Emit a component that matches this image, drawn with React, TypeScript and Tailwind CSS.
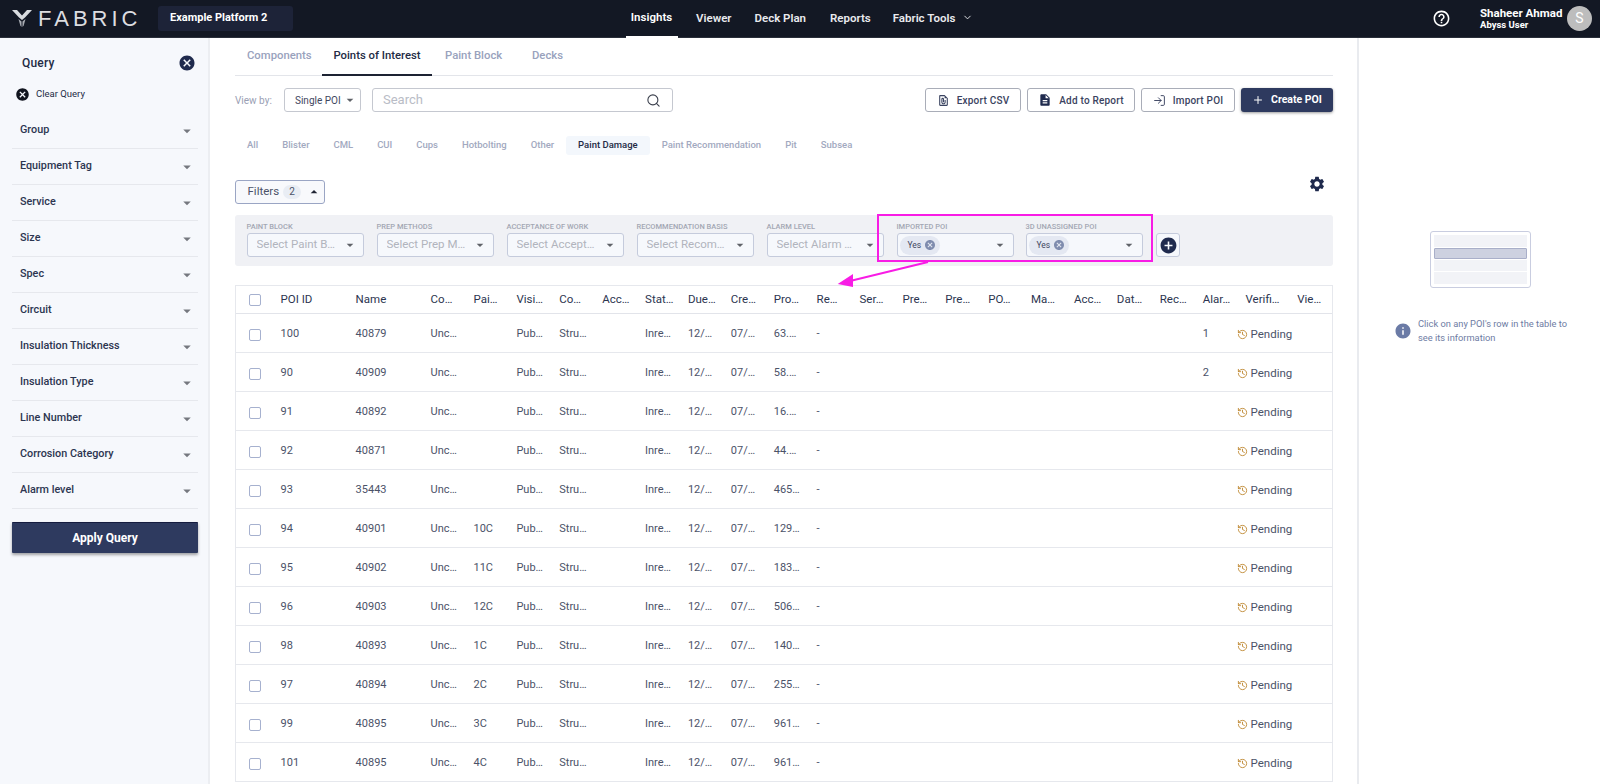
import React from 'react';
import { History, LogIn, Plus, Search, ChevronDown } from 'lucide-react';
import {
  MdAddCircle,
  MdArrowDropDown,
  MdArrowDropUp,
  MdCancel,
  MdDescription,
  MdHelpOutline,
  MdInfo,
  MdOutlineFilePresent,
  MdSettings,
} from 'react-icons/md';

const queryItems = [
  'Group',
  'Equipment Tag',
  'Service',
  'Size',
  'Spec',
  'Circuit',
  'Insulation Thickness',
  'Insulation Type',
  'Line Number',
  'Corrosion Category',
  'Alarm level',
];

const poiTypes = ['All', 'Blister', 'CML', 'CUI', 'Cups', 'Hotbolting', 'Other', 'Paint Damage', 'Paint Recommendation', 'Pit', 'Subsea'];

const filterSelects = [
  ['PAINT BLOCK', 'Select Paint B…'],
  ['PREP METHODS', 'Select Prep M…'],
  ['ACCEPTANCE OF WORK', 'Select Accept…'],
  ['RECOMMENDATION BASIS', 'Select Recom…'],
  ['ALARM LEVEL', 'Select Alarm …'],
];

const headers = ['POI ID', 'Name', 'Co…', 'Pai…', 'Visi…', 'Co…', 'Acc…', 'Stat…', 'Due…', 'Cre…', 'Pro…', 'Re…', 'Ser…', 'Pre…', 'Pre…', 'PO…', 'Ma…', 'Acc…', 'Dat…', 'Rec…', 'Alar…', 'Verifi…', 'Vie…'];

const rows = [
  { id: '100', name: '40879', block: '', pro: '63.…', alarm: '1' },
  { id: '90', name: '40909', block: '', pro: '58.…', alarm: '2' },
  { id: '91', name: '40892', block: '', pro: '16.…', alarm: '' },
  { id: '92', name: '40871', block: '', pro: '44.…', alarm: '' },
  { id: '93', name: '35443', block: '', pro: '465…', alarm: '' },
  { id: '94', name: '40901', block: '10C', pro: '129…', alarm: '' },
  { id: '95', name: '40902', block: '11C', pro: '183…', alarm: '' },
  { id: '96', name: '40903', block: '12C', pro: '506…', alarm: '' },
  { id: '98', name: '40893', block: '1C', pro: '140…', alarm: '' },
  { id: '97', name: '40894', block: '2C', pro: '255…', alarm: '' },
  { id: '99', name: '40895', block: '3C', pro: '961…', alarm: '' },
  { id: '101', name: '40895', block: '4C', pro: '961…', alarm: '' },
];

const gridCols = 'grid grid-cols-[44.6px_75px_75px_repeat(19,42.9px)_51.7px_1fr] items-center';

function Checkbox() {
  return <span className="block w-[12px] h-[12px] rounded-[2px] border-[1.5px] border-[#a6b1cf] bg-white" />;
}

function TopBar() {
  return (
    <header className="h-[38px] bg-[#131824] flex items-center border-b border-[#2a2f3a] shrink-0 relative">
      <div className="flex items-center pl-[12px] w-[158px]">
        <svg width="20" height="17" viewBox="0 0 20 17" className="shrink-0">
          <polygon points="0,0 5,0 10,5.5 15,0 20,0 13,7.5 10,10 7,7.5" fill="#d9dbdf" />
          <polygon points="6.5,9 9.5,11.5 9.5,17 8.3,15.5" fill="#a9acb3" />
          <polygon points="13.5,9 10.5,11.5 10.5,17 11.7,15.5" fill="#a9acb3" />
        </svg>
        <span className="ml-[6px] text-[22px] leading-none tracking-[4px] text-[#dcdde0] font-['Liberation_Sans',sans-serif]">FABRIC</span>
      </div>
      <div className="w-[135px] h-[25px] rounded-[3px] bg-[#1d2338] flex items-center pl-[12px] text-[11px] font-bold text-white">Example Platform 2</div>
      <nav className="flex items-center h-full text-[11.5px] font-semibold text-[#e9eaee]">
        <div className="ml-[332.5px] w-[52px] h-[38px] flex items-center justify-center border-b-2 border-white text-white">Insights</div>
        <div className="ml-[18.5px]">Viewer</div>
        <div className="ml-[23px]">Deck Plan</div>
        <div className="ml-[24px]">Reports</div>
        <div className="ml-[22px]">Fabric Tools</div>
        <ChevronDown className="ml-[7px] w-[11px] h-[11px] -mt-[3px]" strokeWidth={2} />
      </nav>
      <div className="ml-auto flex items-center pr-[8px] text-white">
        <MdHelpOutline className="w-[19px] h-[19px] mr-[29px]" />
        <div className="w-[87px] font-bold leading-[12px]">
          <div className="text-[11.5px]">Shaheer Ahmad</div>
          <div className="text-[9.5px]">Abyss User</div>
        </div>
        <div className="w-[25px] h-[25px] rounded-full bg-[#bdbdbd] flex items-center justify-center text-[14px] text-white">S</div>
      </div>
    </header>
  );
}

function QuerySidebar() {
  return (
    <aside className="w-[210px] shrink-0 bg-[#f6f8fc] border-r-2 border-[#eceef2] pl-[12px] pr-[10px]">
      <div className="flex items-center justify-between h-[50px] pl-[10px] pr-[2px]">
        <span className="text-[12px] font-medium text-[#232b45] tracking-[0.2px]">Query</span>
        <MdCancel className="w-[18px] h-[18px] text-[#1f2a4d]" />
      </div>
      <div className="flex items-center h-[12px] ml-[3px] mb-[13px]">
        <MdCancel className="w-[15px] h-[15px] text-[#11151f]" />
        <span className="ml-[6px] text-[9.5px] text-[#232b45]">Clear Query</span>
      </div>
      {queryItems.map((item) => (
        <div key={item} className="h-[36px] flex items-center justify-between border-b-[1.5px] border-[#e6e8ed] pl-[8px] pr-[2px] text-[10.8px] font-medium text-[#2c3550]">
          <span>{item}</span>
          <MdArrowDropDown className="w-[18px] h-[18px] text-[#75787f]" />
        </div>
      ))}
      <button className="mt-[13px] w-full h-[31px] rounded-[1px] bg-[#2e3a5f] border-t border-[#151c3f] shadow-[0_2px_3px_rgba(0,0,0,0.35)] text-[12px] font-bold text-white">Apply Query</button>
    </aside>
  );
}

function ActionButton({ icon, label, width }: { icon: React.ReactNode; label: string; width: string }) {
  return (
    <button className={`${width} h-[24px] flex items-center justify-center gap-[7px] rounded-[3px] border border-[#a9adb8] bg-white text-[10px] font-medium tracking-[0.2px] text-[#3a4360]`}>
      {icon}
      {label}
    </button>
  );
}

function FilterSelect({ label, placeholder }: { label: string; placeholder: string }) {
  return (
    <div className="w-[117px] shrink-0">
      <div className="h-[12px] text-[7.5px] font-medium leading-[12px] text-[#a3a7b3] whitespace-nowrap">{label}</div>
      <div className="h-[24px] rounded-[3px] border border-[#c5cbdc] bg-[#f6f8fc] flex items-center justify-between pl-[9px] pr-[5px] text-[11.5px] text-[#b1b4bd]">
        <span className="whitespace-nowrap overflow-hidden">{placeholder}</span>
        <MdArrowDropDown className="w-[16px] h-[16px] text-[#5f6268] shrink-0" />
      </div>
    </div>
  );
}

function YesSelect({ label }: { label: string }) {
  return (
    <div className="w-[117.5px] shrink-0">
      <div className="h-[12px] text-[7.5px] font-medium leading-[12px] text-[#a3a7b3] whitespace-nowrap">{label}</div>
      <div className="h-[24px] rounded-[3px] border border-[#c5cbdc] bg-[#f6f8fc] flex items-center justify-between pl-[2px] pr-[5px]">
        <span className="h-[19px] w-[40px] rounded-full bg-[#e4e8f2] flex items-center pl-[8px] text-[8.5px] text-[#3f4760]">
          Yes
          <MdCancel className="ml-[3px] w-[12px] h-[12px] text-[#7f8cae]" />
        </span>
        <MdArrowDropDown className="w-[16px] h-[16px] text-[#5f6268]" />
      </div>
    </div>
  );
}

function PoiRows() {
  return (
    <>
      {rows.map((r) => (
        <div key={r.id} className={`${gridCols} h-[39px] pt-[3px] border-b-[1.5px] border-[#e6e8ed]`}>
          <div className="pl-[12.5px]"><Checkbox /></div>
          <div>{r.id}</div>
          <div>{r.name}</div>
          <div>Unc…</div>
          <div>{r.block}</div>
          <div>Pub…</div>
          <div>Stru…</div>
          <div />
          <div>Inre…</div>
          <div>12/…</div>
          <div>07/…</div>
          <div>{r.pro}</div>
          <div>-</div>
          <div /><div /><div /><div /><div /><div /><div /><div />
          <div>{r.alarm}</div>
          <div className="col-span-2 flex items-center -ml-[9px] gap-[3px] text-[11.5px]">
            <History className="w-[11px] h-[11px] text-[#c08a35]" strokeWidth={2} />
            Pending
          </div>
        </div>
      ))}
    </>
  );
}

function Annotation() {
  return (
    <>
      <div className="absolute left-[876.5px] top-[214px] w-[276.5px] h-[48px] border-2 border-[#f81ce5]" />
      <svg className="absolute left-[830px] top-[258px]" width="105" height="32" viewBox="0 0 105 32">
        <line x1="98" y1="4" x2="20" y2="23" stroke="#f81ce5" strokeWidth="2" />
        <polygon points="7.7,26 23,16 23,29" fill="#f81ce5" />
      </svg>
    </>
  );
}

function DetailsPanel() {
  return (
    <aside className="flex-1 border-l-2 border-[#e9ebef] bg-white pt-[193px]">
      <div className="ml-[71px] w-[101px] h-[57px] rounded-[3px] border border-[#c9cde0] bg-white p-[3px] flex flex-col gap-[1px]">
        <div className="h-[13px] bg-[#f2f3f7]" />
        <div className="h-[11px] bg-[#cdd1e0] border border-[#a9afc9] rounded-[1px]" />
        <div className="h-[11px] bg-[#f2f3f7]" />
        <div className="h-[13px] bg-[#f2f3f7]" />
      </div>
      <div className="mt-[29px] ml-[35px] flex items-center">
        <MdInfo className="w-[18px] h-[18px] text-[#6b7ba6] shrink-0" />
        <p className="ml-[6px] w-[165px] text-[9.3px] leading-[14px] text-[#6e7ca3]">Click on any POI's row in the table to see its information</p>
      </div>
    </aside>
  );
}

export default function App() {
  return (
    <div className="relative w-[1600px] h-[784px] overflow-hidden bg-white flex flex-col font-['Roboto',sans-serif]">
      <TopBar />
      <div className="flex flex-1 min-h-0">
        <QuerySidebar />
        <main className="w-[1147px] shrink-0 pl-[25px]">
          <div className="w-[1098px] h-[38px] flex border-b-[1.5px] border-[#e3e5ea] text-[11.3px] font-medium text-[#99a2bd]">
            <div className="w-[87px] pl-[12px] flex items-center">Components</div>
            <div className="w-[110px] h-[38px] flex items-center justify-center border-b-2 border-[#1d2333] text-[#232b45]">Points of Interest</div>
            <div className="ml-[13px] w-[87px] flex items-center">Paint Block</div>
            <div className="flex items-center">Decks</div>
          </div>
          <div className="w-[1098px] mt-[12px] h-[24px] flex items-center">
            <span className="w-[49px] text-[10px] text-[#9aa0b4]">View by:</span>
            <div className="w-[77px] h-[24px] rounded-[3px] border border-[#c5c8d0] flex items-center pl-[10px] text-[10px] text-[#3f4760]">
              Single POI
              <MdArrowDropDown className="ml-[1px] w-[16px] h-[16px] text-[#5f6268]" />
            </div>
            <div className="ml-[11px] w-[301px] h-[24px] rounded-[3px] border border-[#c5c8d0] flex items-center justify-between pl-[10px] pr-[11px] text-[13px] text-[#b9bcc6]">
              Search
              <Search className="w-[15px] h-[15px] text-[#3a3f4c]" strokeWidth={1.75} />
            </div>
            <div className="ml-auto flex items-center gap-[6px]">
              <ActionButton width="w-[96px]" icon={<MdOutlineFilePresent className="w-[13px] h-[13px]" />} label="Export CSV" />
              <ActionButton width="w-[108px]" icon={<MdDescription className="w-[14px] h-[14px] text-[#1f2a4d]" />} label="Add to Report" />
              <ActionButton width="w-[94px]" icon={<LogIn className="w-[13px] h-[13px]" strokeWidth={1.75} />} label="Import POI" />
              <button className="h-[24px] w-[92px] flex items-center justify-center gap-[7px] rounded-[3px] bg-[#2e3a5f] shadow-[0_1px_3px_rgba(0,0,0,0.4)] text-[10.5px] font-bold text-white">
                <Plus className="w-[12px] h-[12px]" strokeWidth={2} />
                Create POI
              </button>
            </div>
          </div>
          <div className="mt-[24px] h-[19px] flex items-center text-[9.5px] font-medium text-[#a2a9c0]">
            {poiTypes.map((t) => (
              <div key={t} className={t === 'Paint Damage' ? 'h-[19px] px-[12px] rounded-[3px] bg-[#f3f7fc] flex items-center text-[#232b45]' : 'h-[19px] px-[12px] flex items-center'}>{t}</div>
            ))}
          </div>
          <div className="w-[1098px] mt-[24.5px] h-[24px] flex items-center justify-between">
            <div className="w-[90px] h-[24px] rounded-[3px] border border-[#9aa5c4] bg-[#f8f9fc] flex items-center pl-[11.5px] text-[11.5px] text-[#4b5268]">
              Filters
              <span className="ml-[4px] w-[18px] h-[14px] rounded-full bg-[#e9edf4] flex items-center justify-center text-[10px]">2</span>
              <MdArrowDropUp className="ml-[5px] w-[16px] h-[16px] text-[#1f2433]" />
            </div>
            <MdSettings className="w-[18px] h-[18px] text-[#1f2a4d] mr-[7px] -mt-[16px]" />
          </div>
          <div className="w-[1098px] mt-[11.5px] h-[51px] rounded-[3px] bg-[#f0f1f5] flex items-start gap-[13px] pl-[11.5px] pt-[6px]">
            {filterSelects.map(([label, placeholder]) => (
              <FilterSelect key={label} label={label} placeholder={placeholder} />
            ))}
            <div className="flex gap-[11.5px]">
              <YesSelect label="IMPORTED POI" />
              <YesSelect label="3D UNASSIGNED POI" />
            </div>
            <div className="mt-[12px] w-[24px] h-[24px] rounded-[3px] border border-[#c5cbdc] bg-[#f6f8fc] flex items-center justify-center">
              <MdAddCircle className="w-[19px] h-[19px] text-[#1f2a4d]" />
            </div>
          </div>
          <div className="w-[1098px] mt-[19px] border-x border-t border-[#e6e8ed] text-[11px] text-[#4b5268]">
            <div className={`${gridCols} h-[28px] border-b-[1.5px] border-[#e2e4ea] text-[11.5px] text-[#2c3550]`}>
              <div className="pl-[12.5px]"><Checkbox /></div>
              {headers.map((h, i) => (
                <div key={i} className="whitespace-nowrap">{h}</div>
              ))}
            </div>
            <PoiRows />
          </div>
        </main>
        <DetailsPanel />
      </div>
      <Annotation />
    </div>
  );
}
